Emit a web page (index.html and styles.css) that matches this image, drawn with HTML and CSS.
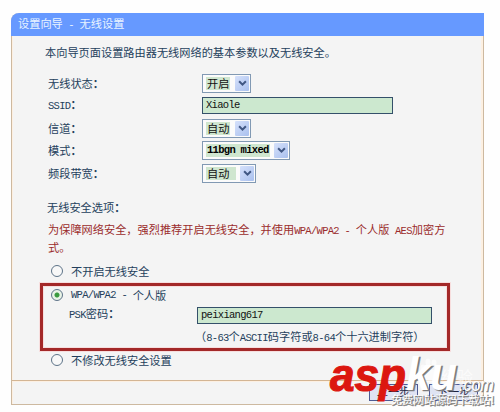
FILE: index.html
```html
<!DOCTYPE html>
<html lang="zh-CN">
<head>
    <meta charset="UTF-8">
    <title>设置向导 - 无线设置</title>
    <link rel="stylesheet" href="styles.css">
</head>
<body>
    <div class="panel">
        <div class="title">设置向导<span class="en"> - </span>无线设置</div>
        <div class="content">
            <p class="intro">本向导页面设置路由器无线网络的基本参数以及无线安全。</p>

            <div class="row">
                <span class="label">无线状态<b>：</b></span>
                <div class="select"><span class="value">开启</span><span class="arrow"><svg viewBox="0 0 8 6"><path d="M1 1l3 3 3-3"/></svg></span></div>
            </div>
            <div class="row">
                <span class="label"><span class="en">SSID</span><b>：</b></span>
                <div class="input ssid en">Xiaole</div>
            </div>
            <div class="row">
                <span class="label">信道<b>：</b></span>
                <div class="select"><span class="value">自动</span><span class="arrow"><svg viewBox="0 0 8 6"><path d="M1 1l3 3 3-3"/></svg></span></div>
            </div>
            <div class="row">
                <span class="label">模式<b>：</b></span>
                <div class="select mode"><span class="value en">11bgn mixed</span><span class="arrow"><svg viewBox="0 0 8 6"><path d="M1 1l3 3 3-3"/></svg></span></div>
            </div>
            <div class="row">
                <span class="label">频段带宽<b>：</b></span>
                <div class="select band"><span class="value">自动</span><span class="arrow"><svg viewBox="0 0 8 6"><path d="M1 1l3 3 3-3"/></svg></span></div>
            </div>

            <p class="heading">无线安全选项<b>：</b></p>
            <p class="warning">为保障网络安全，强烈推荐开启无线安全，并使用<span class="en">WPA/WPA2 - </span>个人版<span class="en"> AES</span>加密方<br>式。</p>

            <div class="option first"><span class="radio"></span>不开启无线安全</div>
            <div class="highlight">
                <div class="option"><span class="radio checked"></span><span class="en">WPA/WPA2 - </span>个人版</div>
                <div class="psk">
                    <span class="psk-label"><span class="en">PSK</span>密码<b>：</b></span>
                    <div class="input key en">peixiang617</div>
                </div>
                <div class="hint"><span class="paren">（</span><span class="en">8-63</span>个<span class="en">ASCII</span>码字符或<span class="en">8-64</span>个十六进制字符<span>）</span></div>
            </div>
            <div class="option last"><span class="radio"></span>不修改无线安全设置</div>
        </div>
        <div class="footer">
            <div class="button">上一步</div>
            <div class="button">下一步</div>
        </div>
    </div>

    <svg class="watermark" width="180" height="60" viewBox="320 352 180 60">
        <g class="paw">
            <ellipse cx="423" cy="368" rx="2.5" ry="3.5"/>
            <ellipse cx="428" cy="362" rx="2.5" ry="3.5"/>
            <ellipse cx="434" cy="363" rx="2.5" ry="3.5"/>
            <ellipse cx="438" cy="369" rx="2.5" ry="3.5"/>
            <path d="M423 379q0-5 5-7q4-5 8 0q6 4 5 8q-3 4-8 2q-7 2-10-3z"/>
            <text x="441" y="383" class="faint">经验</text>
        </g>
        <text x="330" y="391" class="asp" textLength="76" lengthAdjust="spacingAndGlyphs">asp</text>
        <text x="407.5" y="391" class="ku shade" textLength="51" lengthAdjust="spacingAndGlyphs">ku</text>
        <text x="406" y="390" class="ku" textLength="51" lengthAdjust="spacingAndGlyphs">ku</text>
        <text x="460" y="392" class="com shade" textLength="35" lengthAdjust="spacingAndGlyphs">.com</text>
        <text x="459" y="391" class="com" textLength="35" lengthAdjust="spacingAndGlyphs">.com</text>
        <text x="392" y="405" class="slogan shade" textLength="103">免费网站源码下载站!</text>
        <text x="391" y="404" class="slogan" textLength="103">免费网站源码下载站!</text>
    </svg>
</body>
</html>
```
FILE: styles.css
```css
body {
    margin: 0;
    padding: 13px 0 0 11px;
    height: 399px;
    overflow: hidden;
    background-color: #fefefe;
    font-family: "Noto Sans CJK SC", sans-serif;
    font-size: 11.2px;
    line-height: 16px;
    color: #243f5c;
}
p {
    margin: 0;
}
.en {
    font-family: "Liberation Mono", "Noto Sans CJK SC", monospace;
    font-size: 10.5px;
    letter-spacing: -0.7px;
    white-space: pre;
}
.panel {
    box-sizing: border-box;
    width: 473px;
    height: 392px;
    border: 1px solid #cdb9a0;
    border-top: none;
    border-radius: 8px 0 0 0;
    background-color: #f4f4f4;
    box-shadow: inset -2px 0 #fdf0e2, inset 1px 0 #fdf0e2;
}
.title {
    height: 23px;
    margin: 0 -1px;
    padding-left: 7px;
    box-sizing: border-box;
    line-height: 21px;
    border-radius: 8px 0 0 0;
    background-color: #6699ff;
    color: #e9f4ff;
}
.content {
    height: 344px;
    padding: 8px 0 0 28px;
    box-sizing: border-box;
}
.intro {
    margin: 0 0 12px 5px;
}
.row {
    display: flex;
    align-items: center;
    height: 22.5px;
    padding-left: 8px;
}
.label {
    width: 154px;
    margin-top: -1px;
}
.select {
    display: flex;
    align-items: center;
    justify-content: space-between;
    box-sizing: border-box;
    width: 49px;
    height: 19px;
    padding: 1px 1px 1px 3px;
    border: 1px solid #8199b3;
    background-color: #fbfbfb;
    color: #111;
}
.mode {
    width: 88px;
}
.band {
    width: 54px;
}
.value {
    height: 13px;
    padding: 0 1px;
    line-height: 13px;
    background-color: #cfe6cf;
}
.mode .value {
    color: #000;
    font-weight: bold;
}
.band .value {
    padding-right: 7px;
}
.arrow {
    display: flex;
    align-items: center;
    justify-content: center;
    width: 14px;
    height: 15px;
    border-radius: 1px;
    background: linear-gradient(135deg, #d6e1fb, #a9c0ee);
}
.arrow svg {
    width: 9px;
    height: 7px;
}
.arrow path {
    fill: none;
    stroke: #405783;
    stroke-width: 1.8;
}
.input {
    box-sizing: border-box;
    height: 17px;
    padding-left: 3px;
    line-height: 14px;
    border: 1px solid #34506a;
    background-color: #cce8cf;
    color: #111;
}
.ssid {
    width: 191px;
}
.key {
    width: 235px;
}
.heading {
    margin: 14px 0 6px 7px;
}
.warning {
    margin-left: 8px;
    color: #9b2c2c;
}
.option {
    display: flex;
    align-items: center;
    height: 20px;
    padding-left: 11px;
}
.first {
    margin-top: 6px;
    margin-bottom: 2px;
}
.radio {
    box-sizing: border-box;
    width: 12px;
    height: 12px;
    margin-right: 8px;
    border: 1px solid #5d7388;
    border-radius: 50%;
    background-color: #f8f8f8;
}
.checked {
    background: radial-gradient(circle, #3a9a3e 0 2px, #e9f3e6 3px);
}
/* red frame round the WPA settings */
.highlight {
    box-sizing: border-box;
    width: 410px;
    height: 68px;
    border: 3px solid #a32828;
    box-shadow: 0 0 0 1px #f7dede, inset 0 0 0 1px #f7dede;
}
.highlight .option {
    height: 18px;
    padding-left: 8px;
}
.psk {
    display: flex;
    align-items: center;
    height: 21px;
    margin-top: 1px;
    padding-left: 26px;
}
.psk-label {
    width: 128px;
    margin-top: -2px;
}
.hint {
    margin: 2px 0 0 153px;
    white-space: nowrap;
}
.paren {
    margin-left: -1px;
}
.last {
    height: 18px;
}
.footer {
    display: flex;
    justify-content: flex-end;
    gap: 11px;
    height: 24px;
    padding: 3px 5px 0 0;
    box-sizing: border-box;
    border-top: 1px solid #d3b594;
    box-shadow: inset 0 1px #fdf0e2;
}
.button {
    box-sizing: border-box;
    width: 49px;
    height: 17px;
    line-height: 13px;
    text-align: center;
    border: 1px solid #4e5b94;
    background-color: #dfe3f3;
    color: #1c2440;
}
.watermark {
    position: absolute;
    left: 320px;
    top: 352px;
    overflow: visible;
}
.paw {
    fill: #ffffff;
    opacity: 0.7;
}
.faint {
    font-size: 16px;
}
.asp,
.ku {
    font-family: "Liberation Sans", Arial, sans-serif;
    font-size: 46px;
    font-weight: bold;
    font-style: italic;
}
.asp {
    fill: #dc1710;
    stroke: #dc1710;
    stroke-width: 1.2px;
}
.ku,
.com,
.slogan {
    fill: #ffffff;
}
.com {
    font-family: "Liberation Sans", Arial, sans-serif;
    font-size: 18px;
    font-style: italic;
}
.slogan {
    font-size: 11.2px;
}
.shade {
    fill: #777777;
    stroke: #8a8a8a;
    stroke-width: 0.6px;
}
```
